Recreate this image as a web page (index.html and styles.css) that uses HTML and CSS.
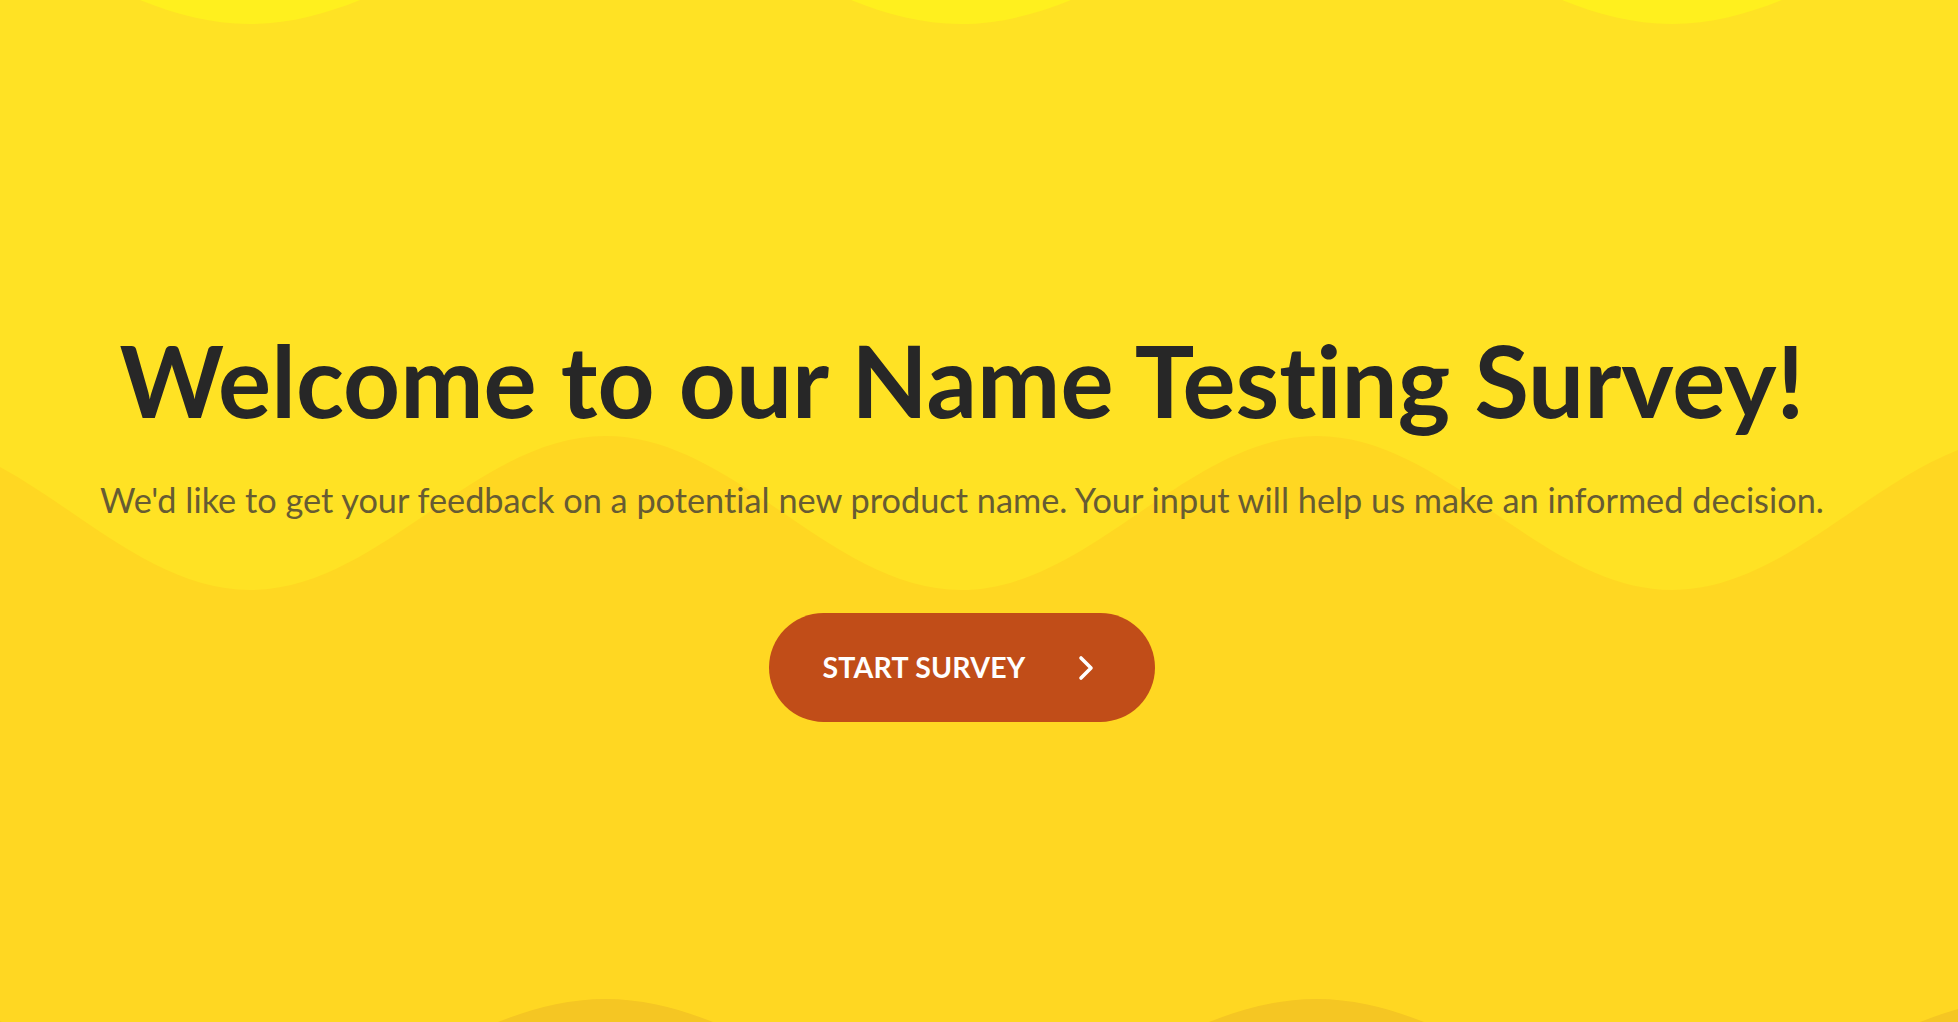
FILE: index.html
```html
<!DOCTYPE html>
<html lang="en">
<head>
<meta charset="utf-8">
<title>Name Testing Survey</title>
<link rel="stylesheet" href="styles.css">
</head>
<body>
<main class="hero">
  <svg class="hero-bg" viewBox="0 0 1958 1022" preserveAspectRatio="none" aria-hidden="true">
    <rect x="0" y="0" width="1958" height="1022" fill="#FFF01E"/>
    <path fill="#FFE224" d="M -461 24 C -331.5 24 -235 -86 -105.5 -86 S 120.5 24 250 24 S 476 -86 605.5 -86 S 831.5 24 961 24 S 1187 -86 1316.5 -86 S 1542.5 24 1672 24 S 1898 -86 2027.5 -86 S 2253.5 24 2383 24 V 1100 H -461 Z"/>
    <path fill="#FFD722" d="M -461 590 C -331.5 590 -235 436 -105.5 436 S 120.5 590 250 590 S 476 436 605.5 436 S 831.5 590 961 590 S 1187 436 1316.5 436 S 1542.5 590 1672 590 S 1898 436 2027.5 436 S 2253.5 590 2383 590 V 1100 H -461 Z"/>
    <path fill="#F5C623" d="M -461 1109 C -331.5 1109 -235 999 -105.5 999 S 120.5 1109 250 1109 S 476 999 605.5 999 S 831.5 1109 961 1109 S 1187 999 1316.5 999 S 1542.5 1109 1672 1109 S 1898 999 2027.5 999 S 2253.5 1109 2383 1109 V 1200 H -461 Z"/>
  </svg>
  <div class="hero-content">
    <h1 class="hero-title">Welcome to our Name Testing Survey!</h1>
    <p class="hero-text">We'd like to get your feedback on a potential new product name. Your input will help us make an informed decision.</p>
    <button class="start-btn" type="button">
      <span class="start-label">START SURVEY</span>
      <svg class="start-icon" viewBox="0 0 16 26" aria-hidden="true"><polyline points="3,3 13,13 3,23" fill="none" stroke="#ffffff" stroke-width="3.6" stroke-linecap="round" stroke-linejoin="round"/></svg>
    </button>
  </div>
</main>
</body>
</html>
```

FILE: styles.css
```css
* {
  box-sizing: border-box;
}

html, body {
  margin: 0;
  padding: 0;
  height: 100%;
}

body {
  font-family: Lato, "Noto Sans", "Liberation Sans", sans-serif;
  font-variant-ligatures: none;
  background: #FFE224;
  overflow: hidden;
}

.hero {
  position: relative;
  width: 100%;
  height: 1022px;
  overflow: hidden;
}

.hero-bg {
  position: absolute;
  left: 0;
  top: 0;
  width: 100%;
  height: 100%;
  display: block;
}

.hero-content {
  position: relative;
  z-index: 1;
  display: flex;
  flex-direction: column;
  align-items: center;
  padding: 325px 34px 0 0;
}

.hero-title {
  margin: 0;
  font-size: 99.5px;
  line-height: 110px;
  font-weight: 700;
  color: #272727;
  white-space: nowrap;
}

.hero-text {
  margin: 40px 0 0;
  font-size: 34.3px;
  line-height: 50px;
  font-weight: 400;
  color: #675c33;
  white-space: nowrap;
}

.start-btn {
  margin-top: 88px;
  height: 109px;
  display: flex;
  align-items: center;
  gap: 53px;
  padding: 0 61px 0 54px;
  border: none;
  border-radius: 55px;
  background: #C14D18;
  color: #ffffff;
  font-family: inherit;
  cursor: pointer;
}

.start-label {
  font-size: 28.5px;
  font-weight: 700;
  letter-spacing: 0.2px;
  line-height: 1;
}

.start-icon {
  width: 16px;
  height: 26px;
  display: block;
}
```
